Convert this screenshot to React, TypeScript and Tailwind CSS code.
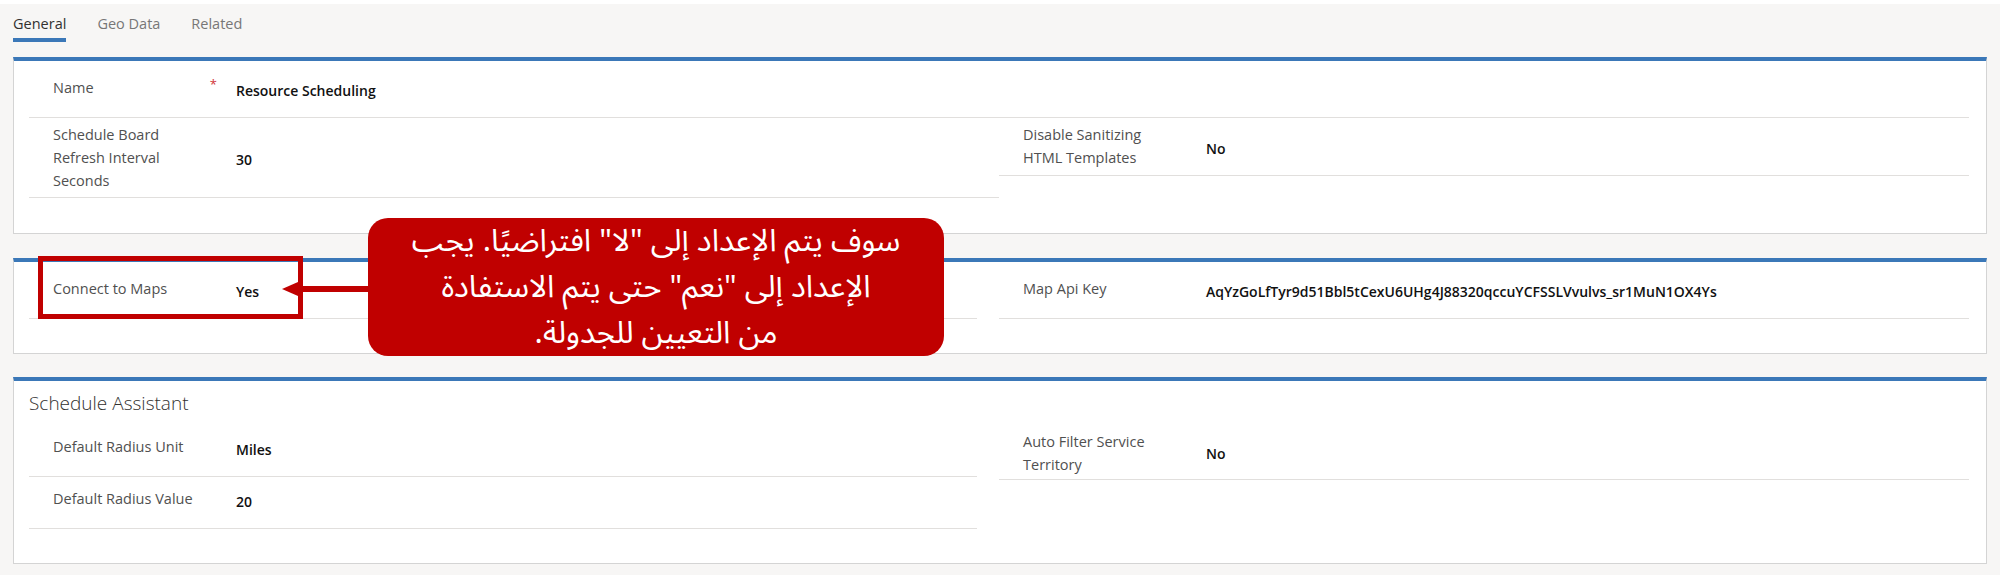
import React from "react";

type RowProps = {
  label: string[];
  value: string;
  required?: boolean;
  h: string;
  multi?: boolean;
};

function Row({ label, value, required, h, multi }: RowProps) {
  return (
    <div className={`flex border-b border-[#e1dfdd] ${h}`}>
      <div
        className={`w-[207px] shrink-0 pl-[24px] pr-[19px] flex justify-between items-start ${
          multi ? "pt-[5px]" : "pt-[10px]"
        }`}
      >
        <div className="text-[14.5px] leading-[23px] text-[#505050]">
          {label.map((l, i) => (
            <div key={i} className="whitespace-nowrap">
              {l}
            </div>
          ))}
        </div>
        {required && <span className="text-[13px] leading-[16px] text-[#d13438]">*</span>}
      </div>
      <div
        className={`flex-1 text-[14px] leading-[23px] font-semibold text-[#111] whitespace-nowrap ${
          multi ? "self-center pt-[3px]" : "pt-[13px]"
        }`}
      >
        {value}
      </div>
    </div>
  );
}

function Card({ children, extra }: { children: React.ReactNode; extra: string }) {
  return (
    <div
      className={`bg-white border border-[#d4d4d4] border-t-4 border-t-[#3b78b8] pl-[15px] pr-[17px] ${extra}`}
    >
      {children}
    </div>
  );
}

export default function App() {
  return (
    <div className="relative w-[2000px] h-[575px] overflow-hidden bg-[#f7f6f5] font-['Open_Sans',sans-serif]">
      <div className="h-[4px] bg-white" />
      {/* Tabs */}
      <div className="flex gap-[31px] px-[13px] pt-[10px]">
        <div className="flex flex-col">
          <span className="text-[14.5px] leading-[20px] text-[#323130]">General</span>
          <span className="mt-[4px] h-[4px] bg-[#3b78b8]" />
        </div>
        <span className="text-[14.5px] leading-[20px] text-[#777]">Geo Data</span>
        <span className="text-[14.5px] leading-[20px] text-[#777]">Related</span>
      </div>

      <div className="px-[13px] mt-[15px] flex flex-col">
        {/* Card 1 */}
        <Card extra="pt-[5px] pb-[35px]">
          <Row label={["Name"]} value="Resource Scheduling" required h="h-[52px]" />
          <div className="grid grid-cols-2 items-start">
            <div>
              <Row
                label={["Schedule Board", "Refresh Interval", "Seconds"]}
                value="30"
                h="h-[80px]"
                multi
              />
            </div>
            <div>
              <Row label={["Disable Sanitizing", "HTML Templates"]} value="No" h="h-[58px]" multi />
            </div>
          </div>
        </Card>

        {/* Card 2 */}
        <div className="mt-[24px]">
          <Card extra="pt-[5px] pb-[34px]">
            <div className="grid grid-cols-2 items-start">
              <div className="pr-[22px]">
                <Row label={["Connect to Maps"]} value="Yes" h="h-[52px]" />
              </div>
              <div>
                <Row
                  label={["Map Api Key"]}
                  value="AqYzGoLfTyr9d51Bbl5tCexU6UHg4J88320qccuYCFSSLVvulvs_sr1MuN1OX4Ys"
                  h="h-[52px]"
                />
              </div>
            </div>
          </Card>
        </div>

        {/* Card 3 */}
        <div className="mt-[23px]">
          <Card extra="pb-[34px]">
            <div className="h-[44px] flex items-center text-[19px] font-light text-[#323130]">
              Schedule Assistant
            </div>
            <div className="grid grid-cols-2 items-start">
              <div className="pr-[22px]">
                <Row label={["Default Radius Unit"]} value="Miles" h="h-[52px]" />
                <Row label={["Default Radius Value"]} value="20" h="h-[52px]" />
              </div>
              <div>
                <Row label={["Auto Filter Service", "Territory"]} value="No" h="h-[55px]" multi />
              </div>
            </div>
          </Card>
        </div>
      </div>

      {/* Highlight box */}
      <div className="absolute left-[38px] top-[256px] w-[265px] h-[63px] border-[5px] border-[#c00000]" />

      {/* Arrow connector */}
      <svg className="absolute left-[280px] top-[280px]" width="92" height="18" viewBox="0 0 92 18">
        <polygon points="2,9 18,2 18,16" fill="#c00000" />
        <rect x="17" y="6" width="75" height="6" fill="#c00000" />
      </svg>

      {/* Callout */}
      <div
        dir="rtl"
        className="absolute left-[368px] top-[218px] w-[576px] h-[138px] rounded-[20px] bg-[#c00000] flex flex-col items-center justify-center text-white text-center text-[31px] leading-[46px] font-['Noto_Sans_Arabic','DejaVu_Sans',sans-serif]"
      >
        <div>سوف يتم الإعداد إلى "لا" افتراضيًا. يجب</div>
        <div>الإعداد إلى "نعم" حتى يتم الاستفادة</div>
        <div>من التعيين للجدولة.</div>
      </div>
    </div>
  );
}
